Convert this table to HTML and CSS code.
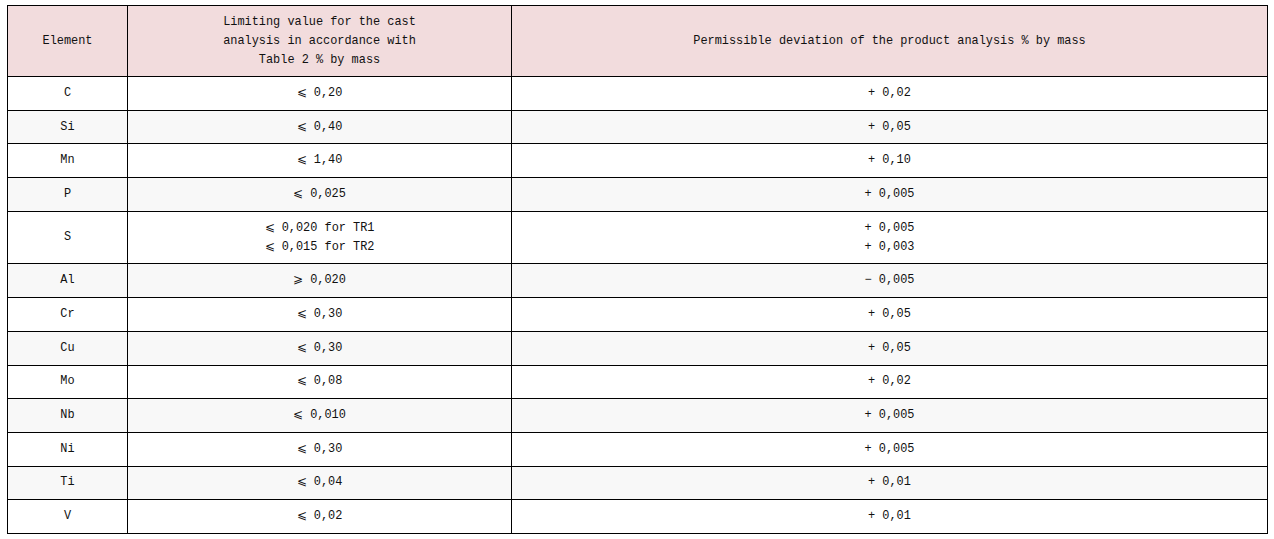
FILE: index.html
```html
<!DOCTYPE html>
<html lang="en">
<head>
<meta charset="utf-8">
<link rel="stylesheet" href="styles.css">
</head>
<body>
<table class="spec">
  <colgroup>
    <col class="c1"><col class="c2"><col class="c3">
  </colgroup>
  <thead>
    <tr>
      <th>Element</th>
      <th>Limiting value for the cast<br>analysis in accordance with<br>Table 2 % by mass</th>
      <th>Permissible deviation of the product analysis % by mass</th>
    </tr>
  </thead>
  <tbody>
    <tr><td>C</td><td>⩽ 0,20</td><td>+ 0,02</td></tr>
    <tr><td>Si</td><td>⩽ 0,40</td><td>+ 0,05</td></tr>
    <tr><td>Mn</td><td>⩽ 1,40</td><td>+ 0,10</td></tr>
    <tr><td>P</td><td>⩽ 0,025</td><td>+ 0,005</td></tr>
    <tr><td>S</td><td>⩽ 0,020 for TR1<br>⩽ 0,015 for TR2</td><td>+ 0,005<br>+ 0,003</td></tr>
    <tr><td>Al</td><td>⩾ 0,020</td><td>− 0,005</td></tr>
    <tr><td>Cr</td><td>⩽ 0,30</td><td>+ 0,05</td></tr>
    <tr><td>Cu</td><td>⩽ 0,30</td><td>+ 0,05</td></tr>
    <tr><td>Mo</td><td>⩽ 0,08</td><td>+ 0,02</td></tr>
    <tr><td>Nb</td><td>⩽ 0,010</td><td>+ 0,005</td></tr>
    <tr><td>Ni</td><td>⩽ 0,30</td><td>+ 0,005</td></tr>
    <tr><td>Ti</td><td>⩽ 0,04</td><td>+ 0,01</td></tr>
    <tr><td>V</td><td>⩽ 0,02</td><td>+ 0,01</td></tr>
  </tbody>
</table>
</body>
</html>
```
FILE: styles.css
```css
html, body {
  margin: 0;
  padding: 0;
  background: #ffffff;
}

body {
  padding: 5px 7px;
  font-family: "Liberation Mono", "DejaVu Sans Mono", "Noto Sans CJK SC", monospace;
  font-size: 11.9px;
  color: #111111;
}

.spec {
  width: 1260px;
  border-collapse: collapse;
  table-layout: fixed;
}

.c1 { width: 120px; }
.c2 { width: 384px; }
.c3 { width: 756px; }

.spec th,
.spec td {
  border: 1px solid #000000;
  text-align: center;
  vertical-align: middle;
  font-weight: normal;
  line-height: 19px;
  padding: 6.85px 4px;
}

.spec thead th {
  background: #f2dcdd;
  padding-top: 6.5px;
  padding-bottom: 6.5px;
}

.spec tbody tr:nth-child(even) td {
  background: #f8f8f8;
}
```
